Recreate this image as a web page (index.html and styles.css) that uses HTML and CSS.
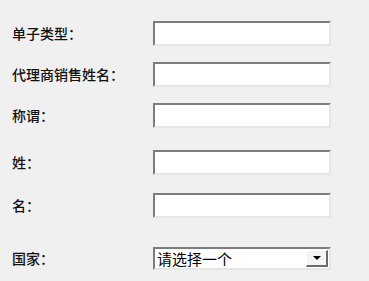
FILE: index.html
```html
<!DOCTYPE html>
<html lang="zh-CN">
<head>
    <meta charset="UTF-8">
    <title>表单</title>
    <link rel="stylesheet" href="styles.css">
</head>
<body>
    <form class="form">
        <div class="row">
            <label for="type">单子类型：</label>
            <input type="text" id="type">
        </div>
        <div class="row">
            <label for="agent">代理商销售姓名：</label>
            <input type="text" id="agent">
        </div>
        <div class="row">
            <label for="title">称谓：</label>
            <input type="text" id="title">
        </div>
        <div class="row row-wide">
            <label for="last">姓：</label>
            <input type="text" id="last">
        </div>
        <div class="row row-mid">
            <label for="first">名：</label>
            <input type="text" id="first">
        </div>
        <div class="row row-far">
            <label>国家：</label>
            <div class="select">
                <span class="select-text">请选择一个</span>
                <span class="select-btn"><span class="arrow"></span></span>
            </div>
        </div>
    </form>
</body>
</html>
```

FILE: styles.css
```css
body {
    margin: 0;
    background: #f0f0f0;
    font-family: "Noto Sans CJK SC", sans-serif;
    color: #111;
}
.form {
    display: flex;
    flex-direction: column;
    padding: 21px 0 0 12px;
}
.row {
    display: grid;
    grid-template-columns: 141px 178px;
    align-items: center;
    margin-bottom: 16px;
}
.row-wide {
    margin-top: 6px;
}
.row-mid {
    margin-top: 2px;
}
.row-far {
    margin-top: 13px;
}
label {
    font-size: 14px;
    line-height: 16px;
    font-weight: 500;
    margin-top: -2px;
}
input {
    box-sizing: border-box;
    width: 178px;
    height: 25px;
    margin: 0;
    padding: 0 3px;
    background: #fff;
    border-top: 2px solid #7c7c7c;
    border-left: 2px solid #7c7c7c;
    border-right: 2px solid #e6e6e6;
    border-bottom: 2px solid #e6e6e6;
    outline: none;
}
.select {
    box-sizing: border-box;
    width: 178px;
    height: 23px;
    display: flex;
    align-items: center;
    background: #fff;
    border-top: 2px solid #7c7c7c;
    border-left: 2px solid #7c7c7c;
    border-right: 2px solid #e6e6e6;
    border-bottom: 2px solid #e6e6e6;
}
.select-text {
    flex: 1;
    font-size: 15px;
    line-height: 19px;
    padding-left: 2px;
    color: #000;
}
.select-btn {
    box-sizing: border-box;
    width: 22px;
    height: 17px;
    margin-right: 1px;
    display: flex;
    align-items: center;
    justify-content: center;
    background: #f4f4f4;
    border-top: 1px solid #fff;
    border-left: 1px solid #fff;
    border-right: 2px solid #6a6a6a;
    border-bottom: 2px solid #6a6a6a;
}
.arrow {
    width: 0;
    height: 0;
    border-left: 4px solid transparent;
    border-right: 4px solid transparent;
    border-top: 4px solid #000;
}
```
